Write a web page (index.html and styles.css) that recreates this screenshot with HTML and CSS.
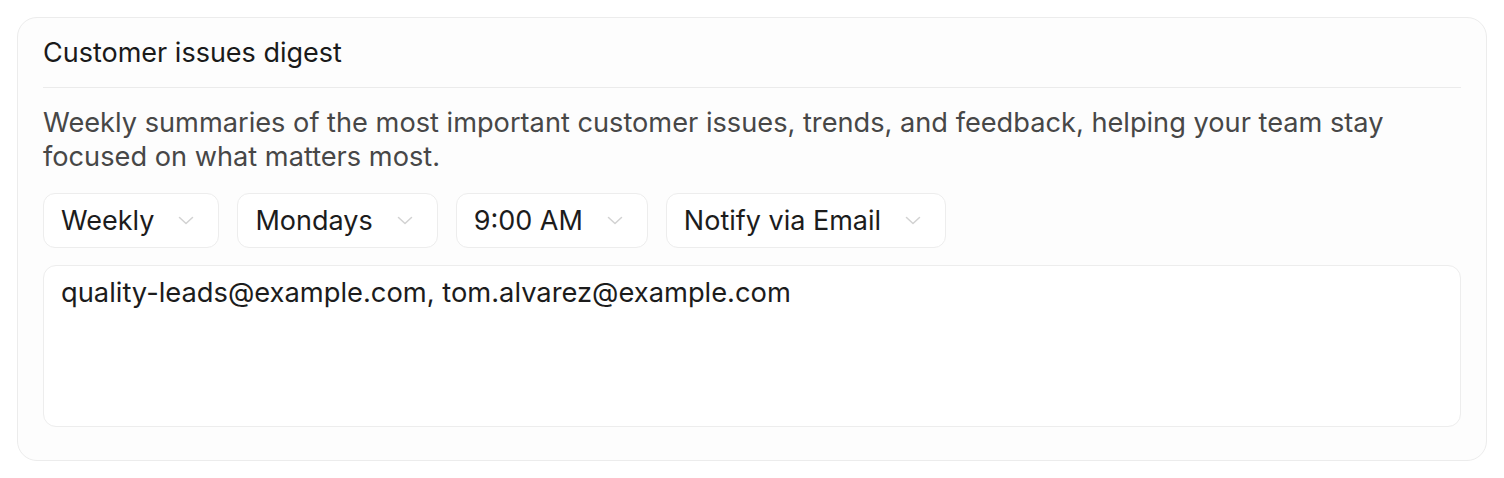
FILE: index.html
```html
<!DOCTYPE html>
<html lang="en">
  <head>
    <meta charset="UTF-8">
    <title>Customer issues digest</title>
    <link rel="stylesheet" href="styles.css">
  </head>
  <body>
    <div class="digest-card">
      <h3 class="digest-title">Customer issues digest</h3>
      <p class="digest-desc">Weekly summaries of the most important customer issues, trends, and feedback, helping your team stay focused on what matters most.</p>
      <div class="digest-controls">
        <button class="select">
          <span>Weekly</span>
          <svg viewBox="0 0 16 9"><path d="M1.5 1.5l6.5 6 6.5-6"/></svg>
        </button>
        <button class="select">
          <span>Mondays</span>
          <svg viewBox="0 0 16 9"><path d="M1.5 1.5l6.5 6 6.5-6"/></svg>
        </button>
        <button class="select">
          <span>9:00 AM</span>
          <svg viewBox="0 0 16 9"><path d="M1.5 1.5l6.5 6 6.5-6"/></svg>
        </button>
        <button class="select">
          <span>Notify via Email</span>
          <svg viewBox="0 0 16 9"><path d="M1.5 1.5l6.5 6 6.5-6"/></svg>
        </button>
      </div>
      <textarea class="digest-recipients">quality-leads@example.com, tom.alvarez@example.com</textarea>
    </div>
  </body>
</html>
```

FILE: styles.css
```css
:root {
  font-family: Inter, "Noto Sans", sans-serif;
  color: #1c1c1c;
  background-color: #ffffff;
  -webkit-font-smoothing: antialiased;
}

body {
  margin: 0;
  padding: 17px 17px 0;
}

.digest-card {
  display: flex;
  flex-direction: column;
  background: #fdfdfd;
  border: 1px solid #ececec;
  border-radius: 20px;
  padding: 20px 25px 33px;
}

.digest-title {
  margin: 0;
  font-size: 27px;
  font-weight: 400;
  line-height: 30px;
  padding-bottom: 19px;
  border-bottom: 1px solid #ebebeb;
  color: #1a1a1a;
}

.digest-desc {
  margin: 18px 0 19px;
  font-size: 27.2px;
  line-height: 34px;
  color: #474747;
}

.digest-controls {
  display: flex;
  gap: 18px;
  margin-bottom: 17px;
}

.select {
  display: flex;
  align-items: center;
  gap: 24px;
  height: 55px;
  padding: 0 24px 0 17px;
  background: #ffffff;
  border: 1.5px solid #ededed;
  border-radius: 12px;
  font-family: inherit;
  font-size: 27px;
  color: #1c1c1c;
}

.select svg {
  width: 16px;
  height: 9px;
  fill: none;
  stroke: #d2d2d2;
  stroke-width: 1.5;
  stroke-linecap: round;
  stroke-linejoin: round;
}

.digest-recipients {
  display: block;
  height: 162px;
  box-sizing: border-box;
  padding: 10px 17px;
  background: #ffffff;
  border: 1.5px solid #ededed;
  border-radius: 13px;
  font-family: inherit;
  font-size: 27.3px;
  line-height: 34px;
  color: #1c1c1c;
  resize: none;
  outline: none;
}
```
